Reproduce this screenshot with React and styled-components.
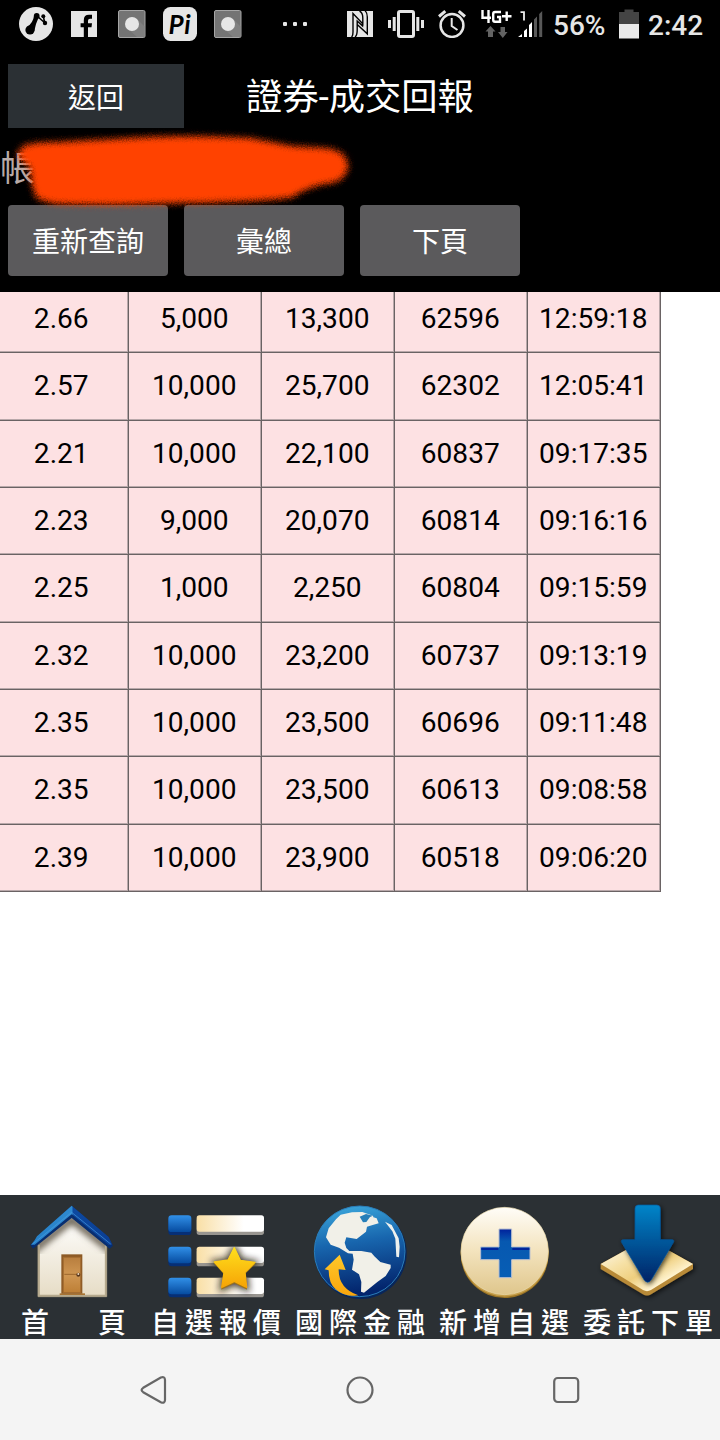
import React from 'react';
import styled, { createGlobalStyle } from 'styled-components';

const ROWS = [
  ['2.66', '5,000', '13,300', '62596', '12:59:18'],
  ['2.57', '10,000', '25,700', '62302', '12:05:41'],
  ['2.21', '10,000', '22,100', '60837', '09:17:35'],
  ['2.23', '9,000', '20,070', '60814', '09:16:16'],
  ['2.25', '1,000', '2,250', '60804', '09:15:59'],
  ['2.32', '10,000', '23,200', '60737', '09:13:19'],
  ['2.35', '10,000', '23,500', '60696', '09:11:48'],
  ['2.35', '10,000', '23,500', '60613', '09:08:58'],
  ['2.39', '10,000', '23,900', '60518', '09:06:20'],
];

const NodesIcon = () => (
  <svg width="34" height="34" viewBox="0 0 34 34">
    <circle cx="17" cy="17" r="17" fill="#e6e6e6" />
    <path d="M8 20Q14 16 15 9L20 9.5Q16.5 17 15.3 24Z" />
    <circle cx="11" cy="23" r="4.6" />
    <circle cx="17.7" cy="9" r="2.9" />
    <circle cx="24.3" cy="9.3" r="2" />
    <circle cx="26" cy="16" r="2.2" />
    <path d="M18 9L26 16M24.3 9.3L25.8 16" stroke="#000" strokeWidth="1.6" />
  </svg>
);

const FacebookIcon = () => (
  <svg width="26" height="26" viewBox="0 0 26 26">
    <path fill="#e6e6e6" d="M0 0h26v26H0z" />
    <path d="M12.8 26V16.3H9.6V12.2H12.8V9.2Q12.8 3.8 18 3.8H21V7.8H19Q17 7.8 17 9.8V12.2H21L20.5 16.3H17V26Z" />
  </svg>
);

const RecordIcon = () => (
  <svg width="28" height="28" viewBox="0 0 28 28">
    <rect x=".5" y=".5" width="26.5" height="27" rx="1.5" fill="#747474" stroke="#a6a6a6" />
    <path fill="#808080" d="M19 9L26.5 16.5V27H19L9 18Z" />
    <circle cx="14" cy="14" r="7" fill="#e6e6e6" />
  </svg>
);

const PiIcon = () => (
  <svg width="34" height="34" viewBox="0 0 34 34">
    <rect width="34" height="34" rx="7.5" fill="#e6e6e6" />
    <text
      x="5.5"
      y="26.5"
      fontFamily="Lato, sans-serif"
      fontSize="26"
      fontWeight="700"
      fontStyle="italic"
      letterSpacing=".6"
    >
      Pi
    </text>
  </svg>
);

const DotsIcon = () => (
  <svg width="24" height="4" viewBox="0 0 24 4" fill="#e6e6e6">
    <rect width="4" height="4" rx="1" />
    <rect x="10" width="4" height="4" rx="1" />
    <rect x="20" width="4" height="4" rx="1" />
  </svg>
);

const NfcIcon = () => (
  <svg width="26" height="26" viewBox="0 0 26 26">
    <path fill="#e6e6e6" d="M0 0h26v26H0z" />
    <path
      fill="none"
      stroke="#000"
      strokeWidth="1.4"
      d="M4.5 26Q6 25 6 21V2.5L15.5 12.5V14.8L10.2 10V19Q10.2 24.5 8 26M18 0Q20.3 1.5 20.3 6V22.8L10.2 13.5M15.8 14.8V7Q15.8 1.5 12.5 0"
    />
  </svg>
);

const VibrateIcon = () => (
  <svg width="36" height="28" viewBox="0 0 36 28" fill="#e6e6e6">
    <rect x="10.5" y="1.5" width="15" height="25" rx="1.5" fill="none" stroke="#e6e6e6" strokeWidth="3" />
    <path d="M0 10h3v8H0zM4.7 7h3v14h-3zM28.3 7h3v14h-3zM33 10h3v8h-3z" />
  </svg>
);

const AlarmIcon = () => (
  <svg width="28" height="28" viewBox="0 0 28 28" fill="none" stroke="#e6e6e6" strokeWidth="2.5">
    <circle cx="14" cy="15.5" r="11.4" />
    <path d="M13.7 8V16L19.5 20" strokeWidth="2" />
    <path d="M1 6.5L7.3 1.2M20.7 1.2L27 6.5" strokeWidth="3" />
  </svg>
);

const NetworkIcon = () => (
  <svg width="31" height="28" viewBox="0 0 31 28">
    <path
      fill="none"
      stroke="#fff"
      strokeWidth="2.4"
      d="M1.5 0V7.7H10M7.5 0V13M20 2H14Q12.2 2 12.2 4V9.8Q12.2 11.8 14 11.8H19V7H16M21 6.3H30.5M25.7 1.5V11"
    />
    <path fill="#626262" d="M9.5 16L14.5 21.5H12V27H7V21.5H4.5ZM19.5 17H24V22H26.5L21.8 28L17 22H19.5Z" />
  </svg>
);

const SignalIcon = () => (
  <svg width="25" height="26" viewBox="0 0 25 26">
    <path fill="#fff" d="M0 26L4 23V26ZM6 20L9 17.5V26H6ZM11 14L14 11V26H11Z" />
    <path fill="#585858" d="M16 8.5L19 5.5V26H16ZM21.2 3L24.2 0V26H21.2Z" />
    <path d="M2.5 1.2H6V9.5" fill="none" stroke="#eee" strokeWidth="1.8" />
  </svg>
);

const BatteryIcon = () => (
  <svg width="20" height="30" viewBox="0 0 20 30">
    <path fill="#444" d="M5.5 0.5H14.5V3H20V15H0V3H5.5Z" />
    <path fill="#eaeaea" d="M0 15H20V29.5H0Z" />
  </svg>
);

const HouseIcon = () => (
  <svg width="144" height="110" viewBox="0 15 432 330">
    <defs>
      <linearGradient id="wall" x2="0" y2="1">
        <stop stopColor="#fff" />
        <stop offset="1" stopColor="#e6dcc5" />
      </linearGradient>
      <linearGradient id="door" x2="0" y2="1">
        <stop stopColor="#b87e3e" />
        <stop offset=".5" stopColor="#cf9652" />
        <stop offset="1" stopColor="#bd7f36" />
      </linearGradient>
      <linearGradient id="roof">
        <stop stopColor="#2580c8" />
        <stop offset=".5" stopColor="#2f8ad0" />
        <stop offset=".52" stopColor="#0d49a0" />
        <stop offset="1" stopColor="#0a3d93" />
      </linearGradient>
      <filter id="eave">
        <feGaussianBlur stdDeviation="9" />
      </filter>
      <clipPath id="wallClip">
        <path d="M114 165L215 78L320 165V320H114Z" />
      </clipPath>
    </defs>
    <path d="M114 165L215 78L320 165V320H114Z" fill="url(#wall)" stroke="#9b9078" strokeWidth="3" />
    <g clipPath="url(#wallClip)">
      <path d="M98 182L215 88L336 182" fill="none" stroke="#6d6556" strokeWidth="24" filter="url(#eave)" />
    </g>
    <path d="M117 165V317H317V165" fill="none" stroke="#b5a98d" strokeWidth="5" />
    <path d="M179 310H255V315H179Z" fill="#a87434" />
    <path d="M184 193H247V311H184Z" fill="#8d5a25" />
    <path d="M190 202H242V308H190Z" fill="url(#door)" stroke="#a46d31" strokeWidth="3" />
    <path d="M193 253H240" stroke="#9d672d" strokeWidth="3" />
    <circle cx="235" cy="254" r="6" fill="#59371b" />
    <circle cx="235" cy="252" r="3" fill="#f0dcc0" />
    <path d="M91 165L103 153L112 140L215 47L325 141L339 167L329 176L215 84L99 176Z" fill="#082e70" />
    <path d="M93 164L104 151L111 139L215 47L326 141L337 164L326 165L215 73L104 164Z" fill="url(#roof)" />
    <path d="M98 162L215 67L332 162" fill="none" stroke="#4c9de0" strokeWidth="3" opacity=".65" />
  </svg>
);

const QuoteListIcon = () => (
  <svg width="144" height="110" viewBox="-3 15 432 330">
    <defs>
      <linearGradient id="tile" x2="0" y2="1">
        <stop stopColor="#3190e8" />
        <stop offset="1" stopColor="#064b9f" />
      </linearGradient>
      <linearGradient id="bar">
        <stop stopColor="#f9dfa6" />
        <stop offset=".7" stopColor="#fff" />
      </linearGradient>
      <linearGradient id="star" x2="0" y2="1">
        <stop stopColor="#ffdf1c" />
        <stop offset="1" stopColor="#f6a406" />
      </linearGradient>
      <filter id="starShadow" x="-40%" y="-40%" width="180%" height="180%">
        <feGaussianBlur stdDeviation="11" />
      </filter>
      <clipPath id="bars">
        <path d="M155 170H357V229H155ZM155 263H357V322H155Z" />
      </clipPath>
    </defs>
    {[76, 170, 263].map(y => (
      <g key={y}>
        <rect x="70" y={y + 6} width="69" height="53" rx="10" fill="#062f76" />
        <rect x="70" y={y} width="69" height="50" rx="10" fill="url(#tile)" />
        <rect x="155" y={y + 8} width="202" height="51" rx="8" fill="#989590" />
        <rect x="155" y={y} width="202" height="49" rx="8" fill="url(#bar)" />
      </g>
    ))}
    <g clipPath="url(#bars)">
      <path
        d="M268 160L292 205L345 214L308 252L314 308L268 286L222 308L230 252L194 212L244 205Z"
        fill="#1c1408"
        opacity=".85"
        filter="url(#starShadow)"
      />
    </g>
    <path d="M268 175L287 214L332 221L301 251L306 299L268 280L229 299L236 252L206 219L248 213Z" fill="#9f7518" />
    <path
      d="M268 173L286 211L330 217L300 247L305 292L268 274L230 292L237 248L208 216L249 210Z"
      fill="url(#star)"
      stroke="url(#star)"
      strokeWidth="4"
      strokeLinejoin="round"
    />
  </svg>
);

const GlobeIcon = () => (
  <svg width="144" height="110" viewBox="-6 15 432 330">
    <defs>
      <linearGradient id="sea" x2=".15" y2="1">
        <stop stopColor="#3eacdf" />
        <stop offset=".45" stopColor="#1866ae" />
        <stop offset="1" stopColor="#03256d" />
      </linearGradient>
      <linearGradient id="orbit" x2="0" y2="1">
        <stop stopColor="#ffc829" />
        <stop offset="1" stopColor="#f9a50d" />
      </linearGradient>
    </defs>
    <circle cx="212" cy="189" r="138" fill="#07265b" />
    <circle cx="209" cy="184" r="136" fill="url(#sea)" stroke="#2a7db9" strokeWidth="3" />
    <path
      fill="#f1f0e8"
      d="M108 142L116 115L138 88L152 74L186 67L217 66L249 77L250 82L260 85L266 100L248 105L231 110L228 125L200 147L169 142L164 158L169 174L178 183L214 183L244 188L253 199L271 216L302 224V234L287 258L262 276L222 308L213 305L214 276L207 253L186 239L191 209L188 191L174 190L147 173L122 164Z"
    />
    <path d="M209 80L228 72L249 77L240 81L229 96L219 97Z" fill="#267fb9" />
    <path d="M285 95L305 105L326 145L329 170L327 202L319 200L316 146L307 124Z" fill="#eef1ee" />
    <path d="M193 317Q163 320 137 298Q116 280 116 241L104 238L149 194L167 240L146 238Q145 295 205 316Z" fill="url(#orbit)" />
  </svg>
);

const AddIcon = () => (
  <svg width="144" height="110" viewBox="-9 15 432 330">
    <defs>
      <linearGradient id="coin" x2="0" y2="1">
        <stop stopColor="#fffdf8" />
        <stop offset=".5" stopColor="#f3e3bd" />
        <stop offset="1" stopColor="#dfc68c" />
      </linearGradient>
      <linearGradient id="plus" x2="0" y2="1">
        <stop stopColor="#00219c" />
        <stop offset=".25" stopColor="#0758b0" />
        <stop offset="1" stopColor="#075eb5" />
      </linearGradient>
    </defs>
    <circle cx="209" cy="192" r="132" fill="#9b7425" />
    <circle cx="209" cy="188" r="132" fill="#c59d47" />
    <circle cx="209" cy="183" r="131" fill="url(#coin)" stroke="#e9d9ad" strokeWidth="2" />
    <path d="M192 117H230V171H285V209H230V263H192V209H137V171H192Z" fill="url(#plus)" stroke="#b9bfd0" strokeWidth="3" />
    <path d="M139 173H190V180H139ZM232 173H283V180H232Z" fill="#00259b" />
  </svg>
);

const OrderIcon = () => (
  <svg width="144" height="110" viewBox="3 15 432 330">
    <defs>
      <linearGradient id="plate" x2="1" y2="1">
        <stop stopColor="#fff" />
        <stop offset=".35" stopColor="#f6e1a6" />
        <stop offset=".55" stopColor="#efcf7f" />
        <stop offset=".75" stopColor="#fff4d1" />
        <stop offset="1" stopColor="#e7c374" />
      </linearGradient>
      <linearGradient id="arrow" x2="0" y2="1">
        <stop stopColor="#0585c9" />
        <stop offset="1" stopColor="#032366" />
      </linearGradient>
      <filter id="plateShadow" x="-30%" y="-30%" width="160%" height="160%">
        <feDropShadow dx="4" dy="5" stdDeviation="8" floodColor="#000" floodOpacity=".7" />
      </filter>
    </defs>
    <path
      d="M77 222L203 152Q216 145 229 152L354 222V237L228 313Q216 320 204 313L77 237Z"
      fill="#b88a38"
      filter="url(#plateShadow)"
    />
    <path d="M77 222L203 152Q216 145 229 152L354 222L228 300Q216 307 204 300Z" fill="url(#plate)" />
    <path
      d="M190 45H245Q256 45 256 56V149H290Q300 149 294 159L229 269Q218 284 207 269L141 159Q135 149 146 149H180V56Q180 45 190 45Z"
      fill="url(#arrow)"
      stroke="#0b5599"
      strokeWidth="2"
      filter="url(#plateShadow)"
    />
  </svg>
);

const NAV_ITEMS = [
  { label: '首頁', Icon: HouseIcon, spread: true },
  { label: '自選報價', Icon: QuoteListIcon },
  { label: '國際金融', Icon: GlobeIcon },
  { label: '新增自選', Icon: AddIcon },
  { label: '委託下單', Icon: OrderIcon },
];

const Marker = () => (
  <MarkerSvg width="380" height="96" viewBox="0 124 380 96">
    <defs>
      <filter id="spray" x="-10%" y="-30%" width="120%" height="160%">
        <feGaussianBlur stdDeviation="3.4" result="soft" />
        <feTurbulence type="fractalNoise" baseFrequency=".8" numOctaves="2" seed="4" />
        <feDisplacementMap in="soft" scale="5" xChannelSelector="R" yChannelSelector="G" />
      </filter>
    </defs>
    <path
      fill="#ff4206"
      filter="url(#spray)"
      d="M23 146Q34 142 60 142Q110 139 150 137Q200 135 250 138Q272 142 292 146L325 148Q347 150 348 166Q347 182 325 184Q305 188 293 197Q270 202 180 203Q110 206 60 204Q38 202 35 195Q30 180 30 168Q20 160 17 154Z"
    />
  </MarkerSvg>
);

const App = () => (
  <Screen>
    <GlobalStyle />
    <Header>
      <StatusBar>
        <Slot $width={34} $gap={19}><NodesIcon /></Slot>
        <Slot $width={26} $gap={18}><FacebookIcon /></Slot>
        <Slot $width={28} $gap={21}><RecordIcon /></Slot>
        <Slot $width={34} $gap={17}><PiIcon /></Slot>
        <Slot $width={28} $gap={17}><RecordIcon /></Slot>
        <Slot $width={24} $gap={41}><DotsIcon /></Slot>
        <Slot $width={26} $gap={40}><NfcIcon /></Slot>
        <Slot $width={36} $gap={15}><VibrateIcon /></Slot>
        <Slot $width={28} $gap={14}><AlarmIcon /></Slot>
        <Slot $width={31} $gap={15}><NetworkIcon /></Slot>
        <Slot $width={25} $gap={6}><SignalIcon /></Slot>
        <StatusText $width={53} $gap={10}>56%</StatusText>
        <Slot $width={20} $gap={13}><BatteryIcon /></Slot>
        <StatusText $width={56} $gap={9}>2:42</StatusText>
      </StatusBar>
      <TitleBar>
        <BackButton>返回</BackButton>
        <Title>證券-成交回報</Title>
      </TitleBar>
      <Account>帳</Account>
      <Actions>
        <ActionButton>重新查詢</ActionButton>
        <ActionButton>彙總</ActionButton>
        <ActionButton>下頁</ActionButton>
      </Actions>
      <Marker />
    </Header>
    <TableArea>
      <Table>
        <tbody>
          {ROWS.map(row => (
            <tr key={row[3]}>
              {row.map((value, i) => (
                <Cell key={i}>{value}</Cell>
              ))}
            </tr>
          ))}
        </tbody>
      </Table>
    </TableArea>
    <BottomNav>
      {NAV_ITEMS.map(({ label, Icon, spread }) => (
        <NavItem key={label}>
          <Icon />
          <NavLabel $spread={spread}>
            {[...label].map(char => (
              <span key={char}>{char}</span>
            ))}
          </NavLabel>
        </NavItem>
      ))}
    </BottomNav>
    <SystemBar>
      <svg width="28" height="28" viewBox="0 0 28 28">
        <path d="M3.2 11.8L20.8 1.6Q24.8 0 25 4V24Q24.8 28 20.8 26.2L3.2 16.2Q0 14 3.2 11.8Z" />
      </svg>
      <svg width="28" height="28" viewBox="0 0 28 28">
        <circle cx="14" cy="14" r="12.5" />
      </svg>
      <svg width="28" height="28" viewBox="0 0 28 28">
        <rect x="2.2" y="2" width="24" height="24" rx="3.5" />
      </svg>
    </SystemBar>
  </Screen>
);

export default App;

const GlobalStyle = createGlobalStyle`
  * {
    box-sizing: border-box;
  }

  body {
    margin: 0;
    background: #fff;
    font-family: Roboto, 'Noto Sans CJK TC', sans-serif;
  }

  svg {
    display: block;
  }
`;

const Screen = styled.div`
  display: flex;
  flex-direction: column;
  width: 720px;
  height: 1440px;
  overflow: hidden;
`;

const Header = styled.header`
  position: relative;
  flex: none;
  height: 292px;
  color: #fff;
  background: #000;
`;

const StatusBar = styled.div`
  display: flex;
  align-items: center;
  height: 48px;
`;

const Slot = styled.div`
  flex: none;
  width: ${({ $width }) => $width}px;
  margin-left: ${({ $gap }) => $gap}px;
`;

const StatusText = styled(Slot)`
  color: #e6e6e6;
  font-size: 28px;
  font-weight: 500;
  line-height: 48px;
  padding-top: 3px;
  white-space: nowrap;
`;

const TitleBar = styled.div`
  display: grid;
  grid-template-columns: 176px 1fr 176px;
  grid-template-rows: 64px;
  height: 64px;
  margin: 16px 8px 0;
`;

const BackButton = styled.button`
  padding: 0;
  color: #fff;
  font-family: inherit;
  font-size: 28px;
  background: #2b3034;
  border: none;
`;

const Title = styled.h1`
  margin: 0;
  padding-top: 4px;
  font-size: 36.3px;
  font-weight: 400;
  line-height: 60px;
  text-align: center;
`;

const Account = styled.div`
  height: 77px;
  color: #b8aaa6;
  font-size: 35px;
  line-height: 84px;
`;

const Actions = styled.div`
  display: flex;
  gap: 16px;
  padding-left: 8px;
`;

const ActionButton = styled.button`
  width: 160px;
  height: 71px;
  padding: 0 0 2px;
  color: #fff;
  font-family: inherit;
  font-size: 28px;
  background: #5b5a5c;
  border: none;
  border-radius: 4px;
`;

/* lies over the account number */
const MarkerSvg = styled.svg`
  position: absolute;
  top: 124px;
  left: 0;
`;

const TableArea = styled.main`
  flex: 1;
  min-height: 0;
  overflow: hidden;
`;

/* scrolled a little, so the first row starts under the header */
const Table = styled.table`
  width: 666px;
  height: 607px;
  margin: -7px 0 0 -5px;
  table-layout: fixed;
  border-collapse: collapse;
`;

const Cell = styled.td`
  padding: 0 1.5px 0 0;
  font-size: 28.1px;
  line-height: 32px;
  text-align: center;
  background: #fde1e3;
  border: 1px solid #6a6364;
  box-shadow: inset -1px -1px #b9a8aa;
`;

const BottomNav = styled.nav`
  display: grid;
  grid-template-columns: repeat(5, 144px);
  flex: none;
  height: 144px;
  background: #2b3034;
`;

const NavItem = styled.div`
  overflow: hidden;
`;

const NavLabel = styled.div`
  display: flex;
  justify-content: space-between;
  padding: ${({ $spread }) => ($spread ? '1px 18px 0 21px' : '1px 7px 0')};
  color: #fff;
  font-size: 28px;
  font-weight: 500;
  line-height: 36px;
`;

const SystemBar = styled.footer`
  display: flex;
  align-items: center;
  justify-content: space-between;
  flex: none;
  height: 101px;
  padding: 0 140px;
  background: #f4f4f4;

  > svg {
    fill: none;
    stroke: #666;
    stroke-width: 2.2;
  }
`;
